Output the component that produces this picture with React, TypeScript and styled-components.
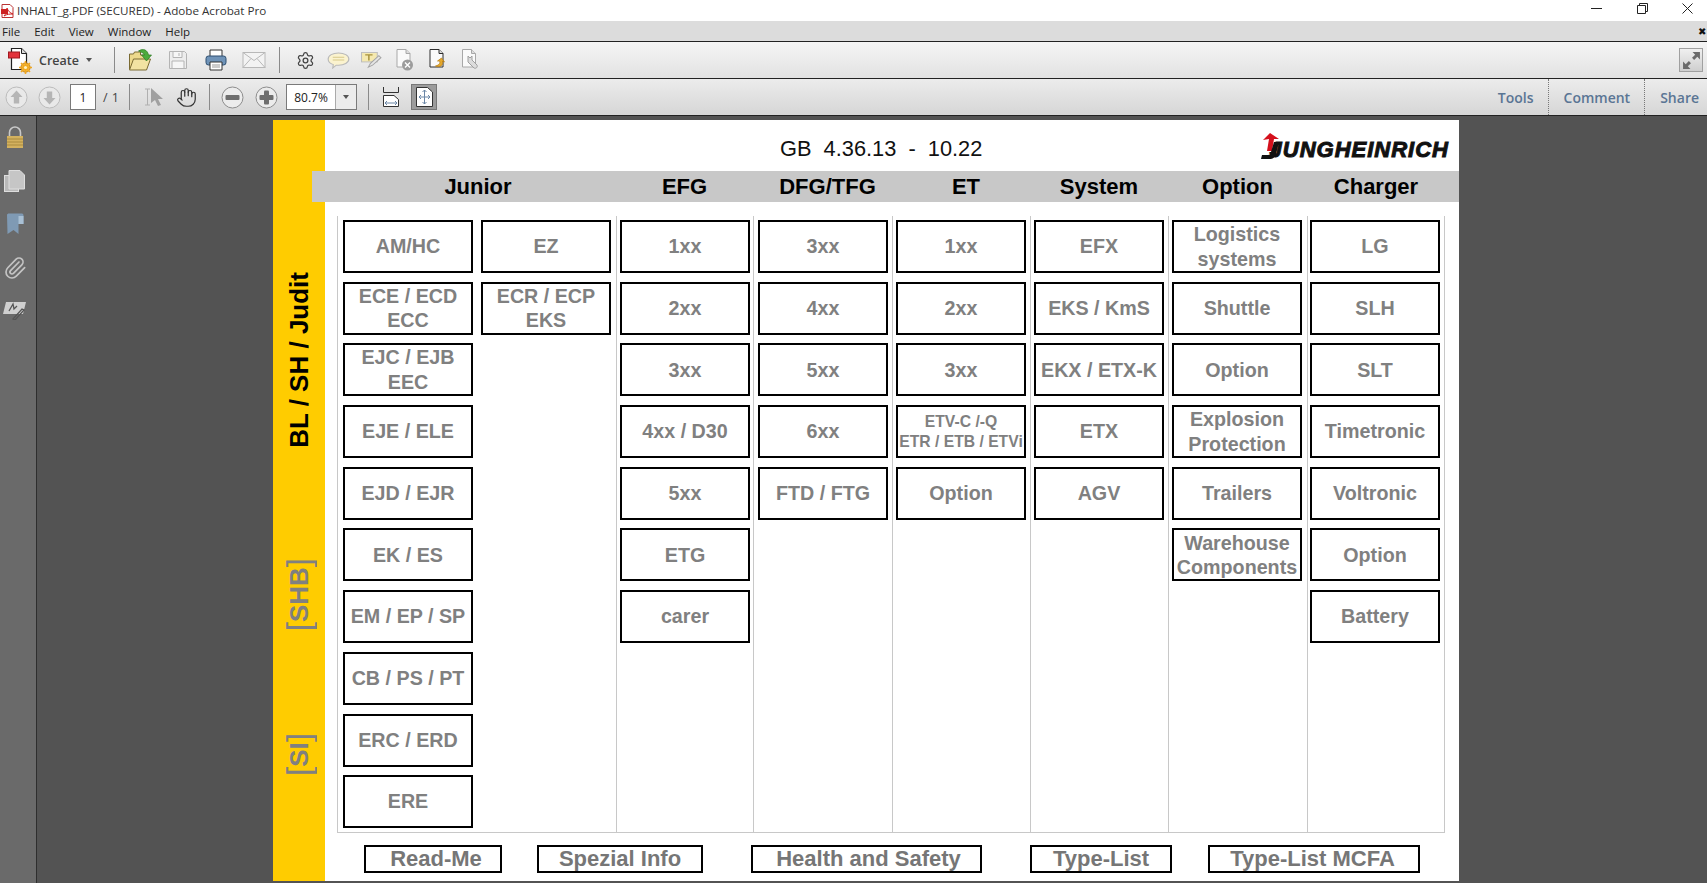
import React from "react";
import styled, { createGlobalStyle } from "styled-components";
import { Hand, Settings, Paperclip } from "lucide-react";

const GlobalStyle = createGlobalStyle`
  html, body {
    margin: 0;
    padding: 0;
    height: 100%;
    overflow: hidden;
    background: #535353;
  }
  * { box-sizing: border-box; }
`;

const juniorA = ["AM/HC", "ECE / ECD\nECC", "EJC / EJB\nEEC", "EJE / ELE", "EJD / EJR", "EK / ES", "EM / EP / SP", "CB / PS / PT", "ERC / ERD", "ERE"];
const juniorB = ["EZ", "ECR / ECP\nEKS"];
const columns: { items: string[]; pl: number }[] = [
  { items: ["1xx", "2xx", "3xx", "4xx / D30", "5xx", "ETG", "carer"], pl: 3 },
  { items: ["3xx", "4xx", "5xx", "6xx", "FTD / FTG"], pl: 4 },
  { items: ["1xx", "2xx", "3xx", "~ETV-C /-Q\nETR / ETB / ETVi", "Option"], pl: 3 },
  { items: ["EFX", "EKS / KmS", "EKX / ETX-K", "ETX", "AGV"], pl: 3 },
  { items: ["Logistics\nsystems", "Shuttle", "Option", "Explosion\nProtection", "Trailers", "Warehouse\nComponents"], pl: 3 },
  { items: ["LG", "SLH", "SLT", "Timetronic", "Voltronic", "Option", "Battery"], pl: 2 },
];
const headers = [
  { label: "Junior", dx: 3 },
  { label: "EFG", dx: 0 },
  { label: "DFG/TFG", dx: 10 },
  { label: "ET", dx: 10 },
  { label: "System", dx: 0 },
  { label: "Option", dx: 0 },
  { label: "Charger", dx: 0 },
];
const footerLinks = [
  { label: "Read-Me", w: 138, ml: 39, dx: 6, pr: 0 },
  { label: "Spezial Info", w: 166, ml: 35, dx: 0, pr: 0 },
  { label: "Health and Safety", w: 231, ml: 48, dx: 4, pr: 0 },
  { label: "Type-List", w: 142, ml: 48, dx: 0, pr: 0 },
  { label: "Type-List MCFA", w: 212, ml: 36, dx: 0, pr: 3 },
];

const PdfIcon = () => (
  <svg width="13" height="14" viewBox="0 0 13 14">
    <path d="M1 .5h8l3 3v10H1z" fill="#fff" stroke="#b33" />
    <path d="M0 5h7v5H0z" fill="#c22" />
    <path d="M3 12c2-2 3-5 3-8 1 3 3 5 6 6-3 0-6 0-9 2z" fill="none" stroke="#c22" />
  </svg>
);

const CreateIcon = () => (
  <svg width="24" height="27" viewBox="0 0 24 27">
    <path d="M3.500 1.500h10l5 5v16h-15z" fill="#fff" stroke="#222" strokeWidth="1.2" />
    <path d="M13.500 1.500v5h5" fill="#ddd" stroke="#222" />
    <rect x="0.500" y="5" width="11" height="6" fill="#e2333c" stroke="#a01a20" />
    <circle cx="17.500" cy="20.500" r="4.600" fill="#f5bb3a" stroke="#c4811a" />
    <path d="M17.500 14v13M11 20.500h13M13 16l9 9M22 16l-9 9" stroke="#f0a820" strokeWidth="1.600" />
    <circle cx="17.500" cy="20.500" r="1.600" fill="#fff2c0" />
  </svg>
);

const FolderIcon = () => (
  <svg width="25" height="24" viewBox="0 0 24 24">
    <path d="M1 21V6h4l1-2h6v3h5v3" fill="#ecd98c" stroke="#7a6a32" />
    <path d="M1 22l4-11h17l-4 11z" fill="#f2e3a2" stroke="#7a6a32" />
    <path d="M10 3c5-3 9-1 10 4h3l-5 6-5-6h3c-1-2-3-3-6-4z" fill="#4cab3c" stroke="#2c7a22" strokeWidth=".7" />
  </svg>
);

const SaveIcon = () => (
  <svg width="20" height="20" viewBox="0 0 20 20" fill="#ededed" stroke="#b4b4b4">
    <path d="M1.500 1.500h15l2 2v15h-17z" />
    <path d="M5 1.500h9v6H5zM4 11h12v7.500H4z" fill="#f6f6f6" />
    <path d="M11 3v3" />
  </svg>
);

const PrintIcon = () => (
  <svg width="22" height="22" viewBox="0 0 22 22">
    <path d="M5 1h12v7H5z" fill="#fff" stroke="#333" />
    <rect x="1" y="7" width="20" height="9" rx="2.500" fill="#6f93b8" stroke="#2f4f70" />
    <path d="M5 13h12v8H5z" fill="#fff" stroke="#333" />
    <path d="M7 16h8M7 18h8" stroke="#999" />
  </svg>
);

const MailIcon = () => (
  <svg width="24" height="16" viewBox="0 0 23 16" fill="#f3f3f3" stroke="#b8b8b8">
    <rect x=".5" y=".5" width="22" height="15" />
    <path d="M.5.500l11 8 11-8M.5 15.500l8-9M22.500 15.500l-8-9" fill="none" />
  </svg>
);

const BubbleIcon = () => (
  <svg width="23" height="17" viewBox="0 0 20 18" preserveAspectRatio="none">
    <path d="M10 1c5 0 9 2.700 9 6.500S15 14 10 14H8l-3 3 .5-3.600C3 12.500 1 10.300 1 7.500 1 3.700 5 1 10 1z" fill="#fbf3cf" stroke="#b9b9b9" />
    <path d="M5 5.500h10M5 8.500h10" stroke="#d8c98a" />
  </svg>
);

const TextEditIcon = () => (
  <svg width="21" height="17" viewBox="0 0 20 18" preserveAspectRatio="none">
    <rect x=".5" y=".5" width="15" height="10" fill="#f5e9b0" stroke="#bdbdbd" />
    <path d="M4 3h7M7.500 3v6" stroke="#a8923c" strokeWidth="1.400" />
    <path d="M7 16l2-4 8-8 2 2-8 8z" fill="#e6e6e6" stroke="#a5a5a5" />
  </svg>
);

const DocBase = ({ stroke }: { stroke: string }) => (
  <>
    <path d="M1.500.5h9l4 4V18h-13z" fill="#fafafa" stroke={stroke} />
    <path d="M10.500.5v4h4" fill="#ddd" stroke={stroke} />
  </>
);

const DocX = () => (
  <svg width="19" height="22" viewBox="0 0 18 22">
    <DocBase stroke="#a8a8a8" />
    <circle cx="12" cy="16" r="5.500" fill="#9c9c9c" />
    <path d="M9.500 13.500l5 5M14.500 13.500l-5 5" stroke="#fff" strokeWidth="1.400" />
  </svg>
);

const DocArrow = () => (
  <svg width="19" height="22" viewBox="0 0 18 22">
    <DocBase stroke="#2c2c2c" />
    <path d="M7 17c5 2 8-1 7-5l2 1-3-4-4 3 2 0c1 2 0 4-4 5z" fill="#e6a92c" stroke="#b47a10" strokeWidth=".7" />
  </svg>
);

const DocWrench = () => (
  <svg width="19" height="22" viewBox="0 0 19 22">
    <DocBase stroke="#a8a8a8" />
    <path d="M7 7v6l6 6c2 1 4-1 3-3l-5-5V7l-2 2z" fill="#dcdcdc" stroke="#9f9f9f" />
  </svg>
);

const ArrowCircle = ({ down }: { down?: boolean }) => (
  <svg width="23" height="23" viewBox="0 0 23 23">
    <circle cx="11.500" cy="11.500" r="10.500" fill="#e9e9e9" stroke="#bcbcbc" />
    <path
      d="M11.500 4.500l6 6.500h-3.300v6.500H8.800V11H5.500z"
      fill="#b5b5b5"
      transform={down ? "rotate(180 11.500 11.500)" : undefined}
    />
  </svg>
);

const ZoomCircle = ({ plus }: { plus?: boolean }) => (
  <svg width="23" height="23" viewBox="0 0 23 23">
    <circle cx="11.500" cy="11.500" r="10.500" fill="#ececec" stroke="#8d8d8d" />
    <rect x="4.500" y="9" width="14" height="5" rx="1" fill="#6e6e6e" />
    {plus && <rect x="9" y="4.500" width="5" height="14" rx="1" fill="#6e6e6e" />}
  </svg>
);

const SelectIcon = () => (
  <svg width="20" height="20" viewBox="0 0 20 20">
    <path d="M1 2h5M1 18h5M3.500 2v16" stroke="#b0b0b0" fill="none" />
    <path d="M7 1l12 11h-5l3 6-3 1-3-6-4 3z" fill="#a0a0a0" />
  </svg>
);

const FitWidthIcon = () => (
  <svg width="16" height="20" viewBox="0 0 16 20" fill="none" stroke="#333">
    <path d="M.5 0v5.500h15V0" />
    <path d="M.5 19.500V8.500h10.500l4.500 4v7z" fill="#fff" />
    <path d="M2 16h12M2 16l2-2M2 16l2 2M14 16l-2-2M14 16l-2 2" stroke="#6a86a6" />
  </svg>
);

const FitPageIcon = () => (
  <svg width="17" height="20" viewBox="0 0 17 20" fill="#fff" stroke="#333">
    <path d="M.5.500h11l5 4.500v14.500H.500z" />
    <path d="M8.500 3v14M3 10h11M8.500 3l-2 2M8.500 3l2 2M8.500 17l-2-2M8.500 17l2-2M3 10l2-2M3 10l2 2M14 10l-2-2M14 10l-2 2" stroke="#6a86a6" fill="none" />
  </svg>
);

const ExpandIcon = () => (
  <svg width="19" height="19" viewBox="0 0 18 18" fill="#6a6a6a">
    <path d="M10 1h7v7l-2.500-2.500-3 3-2-2 3-3zM8 17H1v-7l2.500 2.500 3-3 2 2-3 3z" />
  </svg>
);

const MinimizeIcon = () => (
  <svg width="11" height="11" viewBox="0 0 11 11" stroke="#222"><path d="M0 5.500h11" /></svg>
);
const RestoreIcon = () => (
  <svg width="11" height="11" viewBox="0 0 11 11" fill="none" stroke="#222">
    <path d="M.5 2.500h8v8h-8zM2.500 2.500v-2h8v8h-2" />
  </svg>
);
const CloseIcon = () => (
  <svg width="11" height="11" viewBox="0 0 11 11" stroke="#222"><path d="M.5.500l10 10M10.500.500l-10 10" /></svg>
);

const LockIcon = () => (
  <svg width="18" height="23" viewBox="0 0 18 23">
    <path d="M3.500 10V6.500a5.500 5.500 0 0 1 11 0V10" fill="none" stroke="#c9c9c9" strokeWidth="1.600" />
    <rect x="1" y="10" width="16" height="12" fill="#d3b15f" />
    <path d="M1 13h16M1 16h16M1 19h16" stroke="#a98a3e" />
  </svg>
);
const PagesIcon = () => (
  <svg width="21" height="22" viewBox="0 0 21 22">
    <rect x=".5" y="5.500" width="14" height="16" fill="#b9b9b9" stroke="#dedede" />
    <path d="M5 .500h11l4.500 4.500v14H5z" fill="#c6c6c6" stroke="#dedede" />
  </svg>
);
const BookmarkIcon = () => (
  <svg width="18" height="22" viewBox="0 0 18 22">
    <path d="M1 2c0-1 1-1.500 2-1.500h13c1 0 1.500 1 1.500 2V11h-5V21l-5-4-6 4z" fill="#7f9ab4" />
    <path d="M12.500 3h5v8h-5z" fill="#a9c0d4" />
  </svg>
);
const SignIcon = () => (
  <svg width="23" height="19" viewBox="0 0 23 19">
    <path d="M3 1h20l-3 12H0z" fill="#d0d0d0" />
    <path d="M6 10l4-7 1 5 3-3M10 18l9-10 2 1-9 10z" fill="none" stroke="#555" strokeWidth="1.300" />
  </svg>
);

const App = () => {
  return (
    <Window>
      <GlobalStyle />
      <TitleBar>
        <TitleLeft>
          <PdfIcon />
          <TitleText>INHALT_g.PDF (SECURED) - Adobe Acrobat Pro</TitleText>
        </TitleLeft>
        <WinControls>
          <WinButton><MinimizeIcon /></WinButton>
          <WinButton><RestoreIcon /></WinButton>
          <WinButton><CloseIcon /></WinButton>
        </WinControls>
      </TitleBar>

      <MenuBar>
        <MenuItem>File</MenuItem>
        <MenuItem>Edit</MenuItem>
        <MenuItem>View</MenuItem>
        <MenuItem>Window</MenuItem>
        <MenuItem>Help</MenuItem>
        <MenuClose>✖</MenuClose>
      </MenuBar>

      <Toolbar>
        <CreateButton>
          <CreateIcon />
          <CreateLabel>Create</CreateLabel>
          <Caret />
        </CreateButton>
        <ToolSep $ml={20} />
        <ToolGroup $w={38} $ml={6}>
          <FolderIcon />
          <SaveIcon />
          <PrintIcon />
          <MailIcon />
        </ToolGroup>
        <ToolSep $ml={6} />
        <ToolGroup $w={33} $ml={8.5}>
          <Settings size={19} color="#444" strokeWidth={1.6} />
          <BubbleIcon />
          <TextEditIcon />
          <DocX />
          <DocArrow />
          <DocWrench />
        </ToolGroup>
        <ExpandButton><ExpandIcon /></ExpandButton>
      </Toolbar>

      <NavBar>
        <NavIcon $w={33} $ml={0}><ArrowCircle /></NavIcon>
        <NavIcon $w={33} $ml={0}><ArrowCircle down /></NavIcon>
        <PageInput>1</PageInput>
        <PageTotal>/ 1</PageTotal>
        <NavSep $ml={10} />
        <NavIcon $w={32} $ml={8}><SelectIcon /></NavIcon>
        <NavIcon $w={32} $ml={0}><Hand size={21} color="#333" strokeWidth={1.4} /></NavIcon>
        <NavSep $ml={7} />
        <NavIcon $w={33.5} $ml={6}><ZoomCircle /></NavIcon>
        <NavIcon $w={33.5} $ml={0}><ZoomCircle plus /></NavIcon>
        <ZoomBox>
          <ZoomValue>80.7%</ZoomValue>
          <ZoomCaret><Caret /></ZoomCaret>
        </ZoomBox>
        <NavSep $ml={11} />
        <NavIcon $w={30} $ml={7}><FitWidthIcon /></NavIcon>
        <FitPageButton><FitPageIcon /></FitPageButton>
        <NavLinks>
          <NavLink>Tools</NavLink>
          <NavLink $divider>Comment</NavLink>
          <NavLink $divider>Share</NavLink>
        </NavLinks>
      </NavBar>

      <Workspace>
        <Sidebar>
          <SideSlot><LockIcon /></SideSlot>
          <SideSlot><PagesIcon /></SideSlot>
          <SideSlot><BookmarkIcon /></SideSlot>
          <SideSlot><Paperclip size={24} color="#c4c4c4" strokeWidth={1.7} /></SideSlot>
          <SideSlot><SignIcon /></SideSlot>
        </Sidebar>
        <Canvas>
          <Page>
            <YellowBar>
              <SideLabel $mt={152}>BL / SH / Judit</SideLabel>
              <SideLabel $mt={110} $muted><Bracket>[</Bracket>SHB<Bracket>]</Bracket></SideLabel>
              <SideLabel $mt={102} $muted><Bracket>[</Bracket>SI<Bracket>]</Bracket></SideLabel>
            </YellowBar>
            <Sheet>
              <HeadRow>
                <DocTitle>GB&nbsp; 4.36.13&nbsp; -&nbsp; 10.22</DocTitle>
                <Logo>
                  <LogoMark viewBox="0 0 18 26">
                    <path d="M9 0l9 6-5 0-2 12-5 0 2-12-6 1z" fill="#d4101c" />
                    <path d="M13 9h5l-3 12c-1 3-3 5-6 5H0l1-4h6c2 0 3-1 3-3z" fill="#111" />
                  </LogoMark>
                  JUNGHEINRICH
                </Logo>
              </HeadRow>
              <HeaderBand>
                {headers.map((h) => (
                  <HeaderCell key={h.label} $dx={h.dx}>{h.label}</HeaderCell>
                ))}
              </HeaderBand>
              <Frame>
                <Column $pl={5}>
                  <JuniorStacks>
                    <Stack>
                      {juniorA.map((t) => <ItemBox key={t}>{t}</ItemBox>)}
                    </Stack>
                    <Stack>
                      {juniorB.map((t) => <ItemBox key={t}>{t}</ItemBox>)}
                    </Stack>
                  </JuniorStacks>
                </Column>
                {columns.map((col, i) => (
                  <Column key={i} $pl={col.pl}>
                    <Stack>
                      {col.items.map((t) => (
                        <ItemBox key={t} $small={t.startsWith("~")}>{t.replace("~", "")}</ItemBox>
                      ))}
                    </Stack>
                  </Column>
                ))}
              </Frame>
              <Footer>
                {footerLinks.map((f) => (
                  <FooterButton key={f.label} $w={f.w} $ml={f.ml} $dx={f.dx} $pr={f.pr}>{f.label}</FooterButton>
                ))}
              </Footer>
            </Sheet>
          </Page>
        </Canvas>
      </Workspace>
    </Window>
  );
};

export default App;

const uiFont = `"Open Sans", "Noto Sans", sans-serif`;
const docFont = `"Liberation Sans", Arial, sans-serif`;
const trackList = `279px 137px 139px 138px 138px 139px 138px`;

const Window = styled.div`
  width: 1707px;
  height: 883px;
  display: flex;
  flex-direction: column;
  overflow: hidden;
  font-family: ${uiFont};
`;

const TitleBar = styled.div`
  height: 21px;
  background: #fff;
  display: flex;
  align-items: center;
  justify-content: space-between;
`;

const TitleLeft = styled.div`
  display: flex;
  align-items: center;
  gap: 3px;
  padding-left: 1px;
`;

const TitleText = styled.span`
  font-size: 11.650px;
  color: #333;
`;

const WinControls = styled.div`
  display: flex;
  padding-right: 14px;
  margin-top: -4px;
`;

const WinButton = styled.div`
  width: 45.500px;
  display: flex;
  justify-content: flex-end;
`;

const MenuBar = styled.div`
  height: 21px;
  background: #dcdcdc;
  border-bottom: 1px solid #222;
  display: flex;
  align-items: center;
  gap: 14px;
  padding-left: 2px;
`;

const MenuItem = styled.span`
  font-size: 11.500px;
  color: #222;
`;

const MenuClose = styled.span`
  margin-left: auto;
  padding-right: 1px;
  font-size: 10px;
  color: #111;
`;

const Toolbar = styled.div`
  height: 37px;
  background: linear-gradient(#f5f5f5, #e2e2e2);
  border-bottom: 1px solid #222;
  display: flex;
  align-items: center;
`;

const CreateButton = styled.div`
  display: flex;
  align-items: center;
  padding-left: 8px;
  width: 94px;
`;

const CreateLabel = styled.span`
  margin-left: 7px;
  margin-right: 7px;
  font-size: 12.500px;
  font-weight: 600;
  color: #444;
`;

const Caret = styled.span`
  width: 0;
  height: 0;
  border-left: 3.500px solid transparent;
  border-right: 3.500px solid transparent;
  border-top: 4px solid #555;
`;

const ToolSep = styled.div<{ $ml: number }>`
  width: 1px;
  height: 26px;
  background: #8a8a8a;
  margin-left: ${(p) => p.$ml}px;
`;

const ToolGroup = styled.div<{ $w: number; $ml: number }>`
  display: grid;
  grid-auto-flow: column;
  grid-auto-columns: ${(p) => p.$w}px;
  justify-items: center;
  align-items: center;
  margin-left: ${(p) => p.$ml}px;
`;

const ExpandButton = styled.div`
  margin-left: auto;
  margin-right: 4px;
  width: 24px;
  height: 24px;
  border: 1px solid #a0a0a0;
  background: linear-gradient(#f0f0f0, #cfcfcf);
  display: flex;
  align-items: center;
  justify-content: center;
`;

const NavBar = styled.div`
  height: 37px;
  background: linear-gradient(#ececec, #d6d6d6);
  border-bottom: 1px solid #222;
  display: flex;
  align-items: center;
`;

const NavIcon = styled.div<{ $w: number; $ml: number }>`
  width: ${(p) => p.$w}px;
  margin-left: ${(p) => p.$ml}px;
  display: flex;
  justify-content: center;
`;

const PageInput = styled.div`
  width: 26px;
  height: 26px;
  margin-left: 4px;
  background: #fff;
  border: 1px solid #7a7a7a;
  display: flex;
  align-items: center;
  justify-content: center;
  font-size: 12px;
  color: #222;
`;

const PageTotal = styled.span`
  width: 16px;
  margin-left: 7px;
  font-size: 12.500px;
  color: #444;
  white-space: nowrap;
  word-spacing: 1px;
`;

const NavSep = styled.div<{ $ml: number }>`
  width: 1px;
  height: 26px;
  background: #8a8a8a;
  margin-left: ${(p) => p.$ml}px;
`;

const ZoomBox = styled.div`
  width: 71px;
  height: 26px;
  margin-left: 3px;
  display: flex;
  background: #fff;
  border: 1px solid #7a7a7a;
`;

const ZoomValue = styled.div`
  width: 48px;
  display: flex;
  align-items: center;
  justify-content: center;
  font-size: 12px;
  color: #222;
`;

const ZoomCaret = styled.div`
  flex: 1;
  border-left: 1px solid #aaa;
  background: #ececec;
  display: flex;
  align-items: center;
  justify-content: center;
`;

const FitPageButton = styled.div`
  width: 26px;
  height: 26px;
  margin-left: 5px;
  background: #9c9c9c;
  border: 1px solid #777;
  display: flex;
  align-items: center;
  justify-content: center;
`;

const NavLinks = styled.div`
  margin-left: auto;
  display: flex;
  align-items: center;
  height: 100%;
  padding-right: 8px;
`;

const NavLink = styled.span<{ $divider?: boolean }>`
  font-size: 14px;
  font-weight: 600;
  color: #5a7594;
  height: 100%;
  display: flex;
  align-items: center;
  ${(p) => p.$divider && `
    margin-left: 14px;
    padding-left: 15px;
    border-left: 1px dotted #777;
  `}
`;

const Workspace = styled.div`
  flex: 1;
  display: flex;
  min-height: 0;
`;

const Sidebar = styled.div`
  width: 37px;
  background: #6a6a6a;
  border-right: 1px solid #2e2e2e;
  display: flex;
  flex-direction: column;
`;

const SideSlot = styled.div`
  height: 43.300px;
  padding-right: 7px;
  display: flex;
  align-items: center;
  justify-content: center;
`;

const Canvas = styled.div`
  flex: 1;
  background: #535353;
  padding: 4px 0 0 236px;
`;

const Page = styled.div`
  width: 1186px;
  height: 761px;
  display: flex;
  background: #fff;
`;

const YellowBar = styled.div`
  width: 52px;
  background: #ffcc00;
  display: flex;
  flex-direction: column;
  align-items: center;
`;

const SideLabel = styled.div<{ $mt: number; $muted?: boolean }>`
  writing-mode: vertical-rl;
  transform: rotate(180deg);
  margin-top: ${(p) => p.$mt}px;
  font: 700 26px ${docFont};
  line-height: 30px;
  white-space: nowrap;
  color: ${(p) => (p.$muted ? "#808080" : "#000")};
`;

const Bracket = styled.span`
  margin: 0 2.500px;
  font-size: 33px;
  font-weight: 400;
  line-height: 30px;
`;

const Sheet = styled.div`
  flex: 1;
  display: flex;
  flex-direction: column;
  font-family: ${docFont};
`;

const HeadRow = styled.div`
  height: 51px;
  display: flex;
  align-items: flex-end;
  padding: 0 10px 9px 455px;
`;

const DocTitle = styled.div`
  font-size: 21.800px;
  line-height: 26px;
  color: #111;
  white-space: nowrap;
`;

const Logo = styled.div`
  position: relative;
  margin-left: auto;
  margin-bottom: 1px;
  font: italic 700 22px/22px ${docFont};
  letter-spacing: 1px;
  color: #111;
  -webkit-text-stroke: 1px #111;
  white-space: nowrap;
`;

const LogoMark = styled.svg`
  position: absolute;
  left: -9px;
  top: -6px;
  width: 18px;
  height: 26px;
`;

const HeaderBand = styled.div`
  height: 31px;
  margin-left: -13px;
  padding: 1px 0 0 25px;
  background: #c8c8c8;
  display: grid;
  grid-template-columns: ${trackList};
  align-items: center;
`;

const HeaderCell = styled.div<{ $dx: number }>`
  padding-left: ${(p) => p.$dx}px;
  text-align: center;
  font-size: 22px;
  font-weight: 700;
  color: #000;
`;

const Frame = styled.div`
  width: 1108px;
  height: 617px;
  margin: 14px 0 0 12px;
  border-bottom: 1px solid #c8c8c8;
  border-right: 1px solid #c8c8c8;
  display: grid;
  grid-template-columns: ${trackList};
`;

const Column = styled.div<{ $pl: number }>`
  border-left: 1px solid #c8c8c8;
  padding: 4px 0 0 ${(p) => p.$pl}px;
`;

const JuniorStacks = styled.div`
  display: flex;
  gap: 8px;
`;

const Stack = styled.div`
  width: 130px;
  display: flex;
  flex-direction: column;
  gap: 8.700px;
`;

const ItemBox = styled.div<{ $small?: boolean }>`
  height: 53px;
  border: 2px solid #000;
  display: flex;
  align-items: center;
  justify-content: center;
  text-align: center;
  white-space: pre-line;
  font-size: ${(p) => (p.$small ? "15.700px" : "19.700px")};
  line-height: ${(p) => (p.$small ? "20px" : "24.400px")};
  font-weight: 700;
  color: #808080;
`;

const Footer = styled.div`
  display: flex;
  margin-top: 12px;
`;

const FooterButton = styled.div<{ $w: number; $ml: number; $dx: number; $pr: number }>`
  width: ${(p) => p.$w}px;
  height: 28px;
  margin-left: ${(p) => p.$ml}px;
  padding: 0 ${(p) => p.$pr}px 0 ${(p) => p.$dx}px;
  border: 2px solid #000;
  display: flex;
  align-items: center;
  justify-content: center;
  font-size: 22px;
  font-weight: 700;
  color: #767676;
  white-space: nowrap;
`;
